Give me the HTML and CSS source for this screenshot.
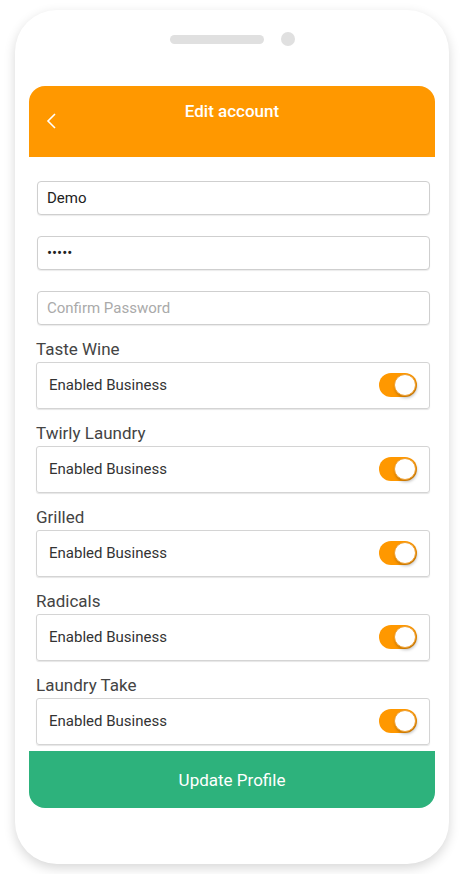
FILE: index.html
```html
<!DOCTYPE html>
<html lang="en">
<head>
    <meta charset="UTF-8">
    <meta name="viewport" content="width=device-width, initial-scale=1.0">
    <title>Edit account</title>
    <link rel="stylesheet" href="styles.css">
</head>
<body>
    <div class="phone">
        <div class="notch">
            <span class="speaker"></span>
            <span class="camera"></span>
        </div>

        <div class="header">
            <svg class="back" width="10" height="16" viewBox="0 0 10 16">
                <path d="M9 1 L2 8 L9 15" fill="none" stroke="#fff" stroke-width="1.6"/>
            </svg>
            <h1>Edit account</h1>
        </div>

        <form class="form">
            <input class="field" type="text" value="Demo">
            <input class="field" type="password" value="demo1">
            <input class="field" type="password" placeholder="Confirm Password">

            <div class="business">
                <div class="name">Taste Wine</div>
                <div class="card">
                    <span>Enabled Business</span>
                    <span class="toggle"><span class="knob"></span></span>
                </div>
            </div>
            <div class="business">
                <div class="name">Twirly Laundry</div>
                <div class="card">
                    <span>Enabled Business</span>
                    <span class="toggle"><span class="knob"></span></span>
                </div>
            </div>
            <div class="business">
                <div class="name">Grilled</div>
                <div class="card">
                    <span>Enabled Business</span>
                    <span class="toggle"><span class="knob"></span></span>
                </div>
            </div>
            <div class="business">
                <div class="name">Radicals</div>
                <div class="card">
                    <span>Enabled Business</span>
                    <span class="toggle"><span class="knob"></span></span>
                </div>
            </div>
            <div class="business">
                <div class="name">Laundry Take</div>
                <div class="card">
                    <span>Enabled Business</span>
                    <span class="toggle"><span class="knob"></span></span>
                </div>
            </div>
        </form>

        <button class="update" type="button">Update Profile</button>
    </div>
</body>
</html>
```

FILE: styles.css
```css
body {
    margin: 0;
    background: #fff;
    font-family: Roboto, 'Liberation Sans', sans-serif;
}
.phone {
    box-sizing: border-box;
    width: 434px;
    height: 854px;
    margin: 10px 15px;
    padding: 22px 14px 0;
    background: #fff;
    border-radius: 42px;
    box-shadow: 0 4px 12px rgba(0, 0, 0, 0.16);
}
.notch {
    display: flex;
    justify-content: center;
    align-items: center;
    gap: 17px;
    height: 14px;
}
.speaker {
    width: 94px;
    height: 9px;
    border-radius: 5px;
    background: #e0e0e0;
}
.camera {
    width: 14px;
    height: 14px;
    border-radius: 50%;
    background: #e0e0e0;
}
.header {
    display: grid;
    grid-template-columns: 17px 10px 1fr 27px;
    height: 71px;
    margin-top: 40px;
    background: #ff9800;
    border-radius: 16px 16px 0 0;
}
.back {
    grid-column: 2;
    margin-top: 27px;
}
.header h1 {
    grid-column: 3;
    margin: 15px 0 0;
    font-size: 17px;
    line-height: 20px;
    font-weight: 500;
    color: #fff;
    text-align: center;
}
.form {
    display: flex;
    flex-direction: column;
    margin: 24px 5px 0 7px;
}
.field {
    box-sizing: border-box;
    height: 34px;
    margin: 0 0 21px 1px;
    padding: 0 9px;
    border: 1px solid #cfcfcf;
    border-radius: 4px;
    box-shadow: 0 1px 1px rgba(0, 0, 0, 0.08);
    font-family: inherit;
    font-size: 15px;
    color: #222;
    outline: none;
}
.field::placeholder {
    color: #aaa;
}
.field:nth-child(3) {
    margin-bottom: 14px;
}
.business {
    margin-bottom: 14px;
}
.business:last-child {
    margin-bottom: 6px;
}
.name {
    font-size: 17px;
    line-height: 20px;
    color: #444;
    margin-bottom: 3px;
}
.card {
    box-sizing: border-box;
    height: 47px;
    display: flex;
    align-items: center;
    justify-content: space-between;
    padding: 0 12px 2px 12px;
    border: 1px solid #d4d4d4;
    border-radius: 3px;
    box-shadow: 0 1px 1px rgba(0, 0, 0, 0.1);
    font-size: 15px;
    color: #333;
}
.toggle {
    position: relative;
    width: 38px;
    height: 24px;
    border-radius: 12px;
    background: #ff9800;
}
.knob {
    position: absolute;
    top: 1px;
    right: 1px;
    box-sizing: border-box;
    width: 22px;
    height: 22px;
    border-radius: 50%;
    background: #fff;
    border: 1px solid #f0a030;
    box-shadow: 1px 2px 3px rgba(0, 0, 0, 0.25);
}
.update {
    display: block;
    width: 100%;
    height: 57px;
    border: none;
    border-radius: 0 0 16px 16px;
    background: #2db27c;
    color: #fff;
    font-family: inherit;
    font-size: 17px;
    cursor: pointer;
}
```
